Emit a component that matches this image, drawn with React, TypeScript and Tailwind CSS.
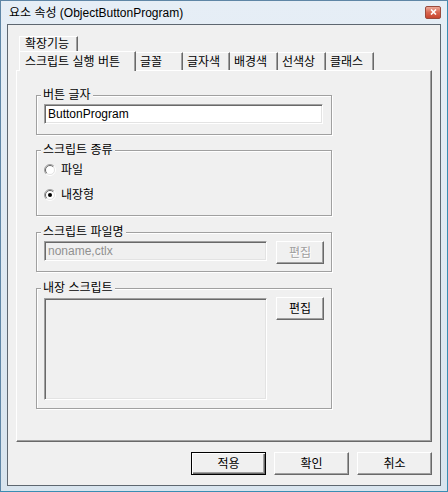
import type { ReactNode } from "react";

const tabsTop = [{ label: "확장기능", w: "w-[59px]" }];

const tabsBottom = [
  { label: "글꼴", w: "w-[47px]" },
  { label: "글자색", w: "w-[47px]" },
  { label: "배경색", w: "w-[48px]" },
  { label: "선색상", w: "w-[48px]" },
  { label: "클래스", w: "w-[48px]" },
];

const sunken =
  "border border-t-[#a0a0a0] border-l-[#a0a0a0] border-r-white border-b-white shadow-[inset_1px_1px_0_#696969,inset_-1px_-1px_0_#e3e3e3]";

const raised =
  "border border-t-white border-l-white border-r-[#696969] border-b-[#696969] shadow-[inset_-1px_-1px_0_#a0a0a0]";

function Group({ label, className, children }: { label: string; className: string; children: ReactNode }) {
  return (
    <fieldset
      className={`min-w-0 w-[296px] border border-[#a0a0a0] px-[7px] shadow-[inset_1px_1px_0_#fff,1px_1px_0_#fff] ${className}`}
    >
      <legend className="ml-[-3px] bg-[#f0f0f0] px-[2px] leading-[14px]">{label}</legend>
      {children}
    </fieldset>
  );
}

function Radio({ checked, label }: { checked?: boolean; label: string }) {
  return (
    <div className="flex h-[16px] items-center">
      <svg width="12" height="12" viewBox="0 0 12 12" aria-hidden>
        <circle cx="6" cy="6" r="4.5" fill="#fff" />
        <path d="M2.1 9.9A5.5 5.5 0 0 1 9.9 2.1" fill="none" stroke="#a0a0a0" />
        <path d="M9.9 2.1A5.5 5.5 0 0 1 2.1 9.9" fill="none" stroke="#fff" />
        <path d="M2.8 9.2A4.5 4.5 0 0 1 9.2 2.8" fill="none" stroke="#696969" />
        <path d="M9.2 2.8A4.5 4.5 0 0 1 2.8 9.2" fill="none" stroke="#e3e3e3" />
        {checked && <circle cx="6" cy="6" r="2" fill="#000" />}
      </svg>
      <span className="ml-[5px] leading-[14px]">{label}</span>
    </div>
  );
}

function EditButton({ disabled }: { disabled?: boolean }) {
  return (
    <div
      className={`flex h-[23px] w-[48px] items-center justify-center bg-[#f0f0f0] ${raised} ${
        disabled ? "text-[#a0a0a0] [text-shadow:1px_1px_0_#fff]" : "text-black"
      }`}
    >
      편집
    </div>
  );
}

function DialogButton({ label, isDefault }: { label: string; isDefault?: boolean }) {
  return (
    <div
      className={`flex h-[23px] w-[75px] items-center justify-center bg-[#f0f0f0] ${
        isDefault
          ? "border border-black shadow-[inset_1px_1px_0_#fff,inset_-1px_-1px_0_#696969,inset_-2px_-2px_0_#a0a0a0]"
          : raised
      }`}
    >
      {label}
    </div>
  );
}

export default function App() {
  return (
    <div className="flex h-[492px] w-[448px] flex-col border border-[#5f86a6] border-r-[#3a8db3] border-b-[#3a8db3] bg-[linear-gradient(#e6eef6,#d8e4ee)] px-[6px] pb-[5px] font-['Liberation_Sans','Noto_Sans_CJK_KR',sans-serif] text-[12px] text-black">
      <div className="flex h-[23px] items-center justify-between pl-[2px]">
        <span className="leading-[14px]">요소 속성 (ObjectButtonProgram)</span>
        <div className="mt-[-1px] flex h-[13px] w-[16px] items-center justify-center rounded-[2px] border border-[#9a4a3c] bg-[linear-gradient(#eca999,#d8654f_50%,#c8452f)]">
          <svg width="7" height="6" viewBox="0 0 7 6" aria-hidden>
            <path d="M1 0.5L6 5.5M6 0.5L1 5.5" stroke="#fff" strokeWidth="1.6" />
          </svg>
        </div>
      </div>

      <div className="flex flex-1 flex-col border border-[#5e6770] bg-[#f0f0f0] px-[8px] pt-[11px]">
        {/* tab strip */}
        <div className="ml-[3px] flex h-[15px]">
          {tabsTop.map((t) => (
            <div
              key={t.label}
              className={`flex h-[15px] items-center border-l border-t border-r border-l-white border-t-white border-r-[#696969] pl-[5px] leading-[14px] shadow-[inset_-1px_0_0_#a0a0a0] ${t.w}`}
            >
              {t.label}
            </div>
          ))}
        </div>
        <div className="relative z-10 -mb-px ml-[3px] flex h-[20px]">
          <div className="flex h-[20px] w-[117px] items-center border-l border-t border-r border-l-white border-t-white border-r-[#696969] bg-[#f0f0f0] pl-[5px] leading-[14px] shadow-[inset_-1px_0_0_#a0a0a0]">
            스크립트 실행 버튼
          </div>
          {tabsBottom.map((t) => (
            <div
              key={t.label}
              className={`mt-[1px] flex h-[18px] items-center border-t border-r border-t-white border-r-[#696969] pl-[4px] leading-[14px] shadow-[inset_-1px_0_0_#a0a0a0] ${t.w}`}
            >
              {t.label}
            </div>
          ))}
        </div>

        {/* tab panel */}
        <div className="flex h-[372px] flex-col border border-t-white border-l-white border-r-[#696969] border-b-[#696969] pl-[19px] pt-[17px] shadow-[inset_-1px_-1px_0_#a0a0a0]">
          <Group label="버튼 글자" className="pb-[10px] pt-[2px]">
            <div className={`flex h-[20px] w-[279px] items-center bg-white pl-[3px] leading-[14px] ${sunken}`}>
              ButtonProgram
            </div>
          </Group>

          <Group label="스크립트 종류" className="mt-[8px] pb-[12px] pt-[5px]">
            <div className="flex flex-col gap-[9px]">
              <Radio label="파일" />
              <Radio label="내장형" checked />
            </div>
          </Group>

          <Group label="스크립트 파일명" className="mt-[9px] pb-[7px] pt-[2px]">
            <div className="flex items-start gap-[9px]">
              <div
                className={`flex h-[20px] w-[223px] items-center bg-[#f0f0f0] pl-[3px] leading-[14px] text-[#909090] ${sunken}`}
              >
                noname,ctlx
              </div>
              <EditButton disabled />
            </div>
          </Group>

          <Group label="내장 스크립트" className="mt-[9px] pb-[8px] pt-[2px]">
            <div className="flex items-start gap-[9px]">
              <div className={`mt-[1px] h-[102px] w-[223px] bg-[#f0f0f0] ${sunken}`} />
              <EditButton />
            </div>
          </Group>
        </div>

        {/* dialog buttons */}
        <div className="mt-[10px] flex justify-end gap-[8px]">
          <DialogButton label="적용" isDefault />
          <DialogButton label="확인" />
          <DialogButton label="취소" />
        </div>
      </div>
    </div>
  );
}
